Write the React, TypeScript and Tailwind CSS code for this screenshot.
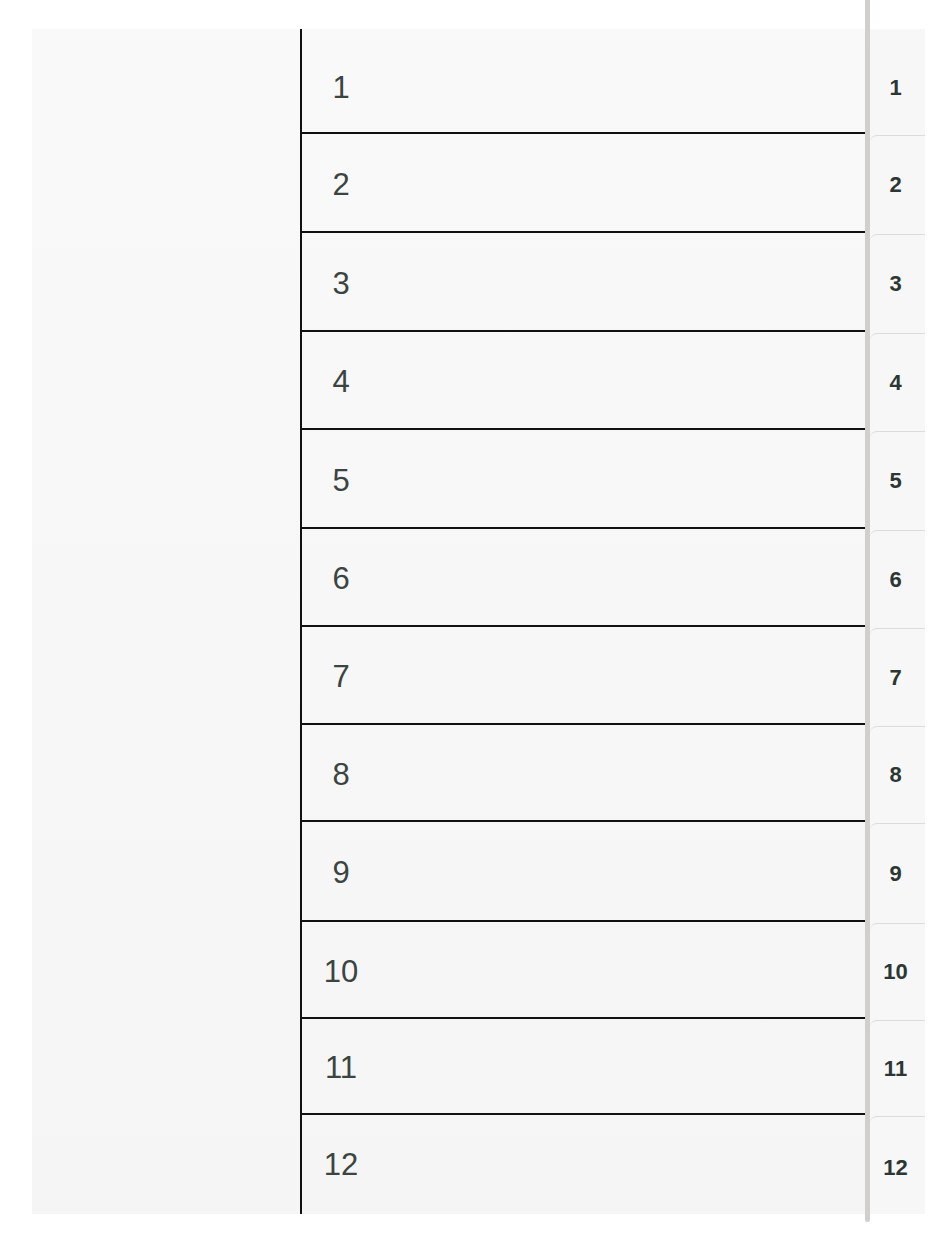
import React from "react";

// Section rows: label and row box (height, top rule).
const rows: { label: string; h: string }[] = [
  { label: "1", h: "h-[103px] pt-[13px]" },
  { label: "2", h: "h-[99px] border-t-2 pt-[3px]" },
  { label: "3", h: "h-[99px] border-t-2 pt-[3px]" },
  { label: "4", h: "h-[98px] border-t-2 pt-[3px]" },
  { label: "5", h: "h-[99px] border-t-2 pt-[3px]" },
  { label: "6", h: "h-[98px] border-t-2 pt-[3px]" },
  { label: "7", h: "h-[98px] border-t-2 pt-[3px]" },
  { label: "8", h: "h-[97px] border-t-2 pt-[3px]" },
  { label: "9", h: "h-[100px] border-t-2 pt-[3px]" },
  { label: "10", h: "h-[97px] border-t-2 pt-[3px]" },
  { label: "11", h: "h-[96px] border-t-2 pt-[2px]" },
  { label: "12", h: "h-[101px] border-t-2" },
];

// Index tabs running down the right edge.
const tabs: { label: string; h: string }[] = [
  { label: "1", h: "h-[106px] pt-[12px]" },
  { label: "2", h: "h-[99px] border-t rounded-tl-[7px]" },
  { label: "3", h: "h-[99px] border-t rounded-tl-[7px]" },
  { label: "4", h: "h-[98px] border-t rounded-tl-[7px]" },
  { label: "5", h: "h-[99px] border-t rounded-tl-[7px]" },
  { label: "6", h: "h-[98px] border-t rounded-tl-[7px]" },
  { label: "7", h: "h-[98px] border-t rounded-tl-[7px]" },
  { label: "8", h: "h-[97px] border-t rounded-tl-[7px]" },
  { label: "9", h: "h-[100px] border-t rounded-tl-[7px]" },
  { label: "10", h: "h-[97px] border-t rounded-tl-[7px]" },
  { label: "11", h: "h-[96px] border-t rounded-tl-[7px]" },
  { label: "12", h: "h-[98px] border-t rounded-tl-[7px] pt-[4px]" },
];

export default function App() {
  return (
    <div
      className="min-h-[1245px] w-[945px] bg-white"
      style={{ fontFamily: '"Liberation Sans", Arial, Helvetica, sans-serif' }}
    >
      <div className="flex items-start pl-[32px]">
        {/* sheet */}
        <div className="mt-[29px] flex h-[1185px] w-[833px] bg-gradient-to-b from-[#f9f9f9] to-[#f5f5f5]">
          <div className="w-[268px] shrink-0" />
          <div className="flex flex-1 flex-col border-l-2 border-[#111111]">
            {rows.map((r) => (
              <div
                key={r.label}
                className={`flex items-center border-[#111111] ${r.h}`}
              >
                <span className="w-[78px] text-center text-[31px] leading-none text-[#3a4441]">
                  {r.label}
                </span>
              </div>
            ))}
          </div>
        </div>

        {/* binder spine */}
        <div className="h-[1222px] w-[5px] shrink-0 rounded-b-full bg-[#d0cfcb]" />

        {/* tab strip */}
        <div className="mt-[29px] flex h-[1185px] w-[55px] flex-col bg-[#f7f7f7]">
          {tabs.map((t) => (
            <div
              key={t.label}
              className={`flex items-center justify-center border-[#dcdcda] bg-[#f7f7f7] pr-[4px] ${t.h}`}
            >
              <span className="text-[22px] font-bold leading-none text-[#2c3633]">
                {t.label}
              </span>
            </div>
          ))}
        </div>
      </div>
    </div>
  );
}
